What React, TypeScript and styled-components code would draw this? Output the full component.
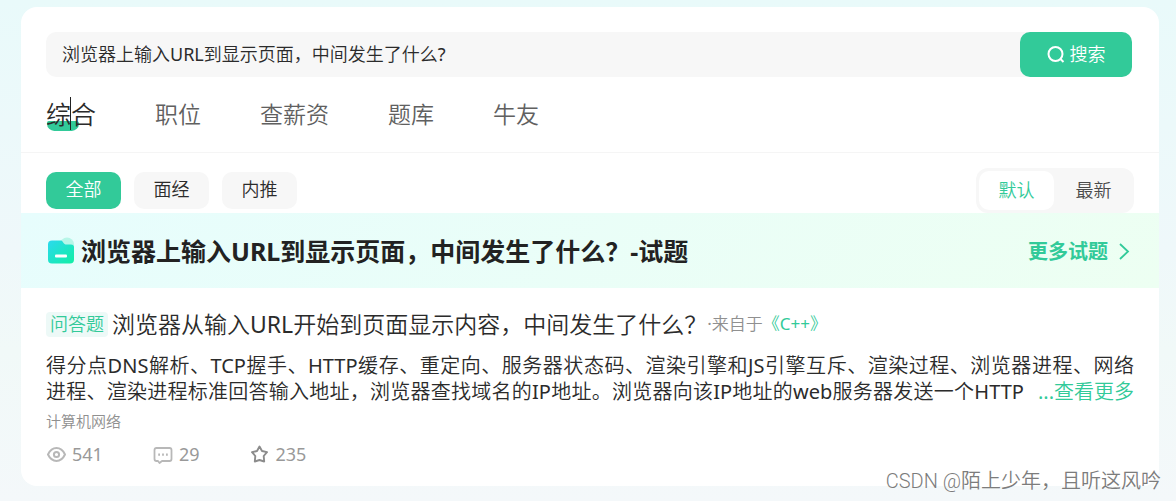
import React from "react";
import styled, { createGlobalStyle } from "styled-components";

const green = "#32ca99";
const sans = `"Noto Sans", "Noto Sans CJK SC DemiLight", "Noto Sans CJK SC", sans-serif`;
const boldSans = `"Noto Sans", "Noto Sans CJK SC", sans-serif`;

const GlobalStyle = createGlobalStyle`
  * { box-sizing: border-box; }
  body {
    margin: 0;
    min-height: 100vh;
    font-family: ${sans};
    font-weight: 400;
    color: #2b2b2b;
    background: linear-gradient(180deg, #e9fafa 0%, #eff8fa 50%, #f1f9f8 70%, #f4f8fa 100%);
  }
  button, input { font: inherit; color: inherit; border: 0; padding: 0; margin: 0; }
  button { cursor: pointer; }
  a { color: ${green}; text-decoration: none; }
  h1, h2, p { margin: 0; }
`;

const Page = styled.div`
  position: relative;
  min-height: 100vh;
  padding: 7px 17px 15px 21px;
`;

const Card = styled.main`
  background: #fff;
  border-radius: 16px;
  overflow: hidden;
`;

const SearchForm = styled.form`
  display: flex;
  height: 45px;
  margin: 25px 27px 0 25px;
  border-radius: 10px;
  background: #f7f7f7;
`;

const SearchInput = styled.input`
  flex: 1;
  min-width: 0;
  padding: 0 16px 4px;
  font-size: 18px;
  background: transparent;
  outline: none;
`;

const SearchButton = styled.button`
  display: flex;
  align-items: center;
  justify-content: center;
  gap: 5px;
  width: 112px;
  border-radius: 10px;
  font-size: 18px;
  color: #fff;
  background: ${green};
`;

const ButtonLabel = styled.span`
  padding-bottom: 4px;
`;

const Tabs = styled.nav`
  display: flex;
  align-items: center;
  gap: 59px;
  height: 76px;
  padding: 0 25px 1px;
  border-bottom: 1px solid #f5f5f5;
`;

const Tab = styled.a<{ $active?: boolean }>`
  position: relative;
  z-index: 0;
  font-size: ${(p) => (p.$active ? 25 : 23)}px;
  line-height: 34px;
  color: ${(p) => (p.$active ? "#2b2b2b" : "#606060")};
`;

const TabMark = styled.span`
  position: absolute;
  z-index: -1;
  left: 1px;
  bottom: 0;
  width: 32px;
  height: 10px;
  border-radius: 2px 3px 8px 8px;
  background: ${green};
`;

const TextCursor = styled.span`
  position: absolute;
  left: 24px;
  top: 0;
  width: 1px;
  height: 33px;
  background: #222;
`;

const FilterBar = styled.div`
  display: flex;
  align-items: center;
  justify-content: space-between;
  padding: 15px 25px 0;
`;

const Filters = styled.div`
  display: flex;
  gap: 13px;
`;

const Filter = styled.button<{ $active?: boolean }>`
  width: 75px;
  height: 37px;
  padding-bottom: 3px;
  border-radius: 10px;
  font-size: 18px;
  line-height: 34px;
  color: ${(p) => (p.$active ? "#fff" : "#2b2b2b")};
  background: ${(p) => (p.$active ? green : "#f7f7f7")};
`;

const SortGroup = styled.div`
  display: flex;
  gap: 2px;
  padding: 3px;
  border-radius: 12px;
  background: #f7f7f7;
`;

const SortButton = styled.button<{ $active?: boolean }>`
  width: 75px;
  height: 39px;
  padding-bottom: 3px;
  border-radius: 10px;
  font-size: 18px;
  color: ${(p) => (p.$active ? green : "#4a4a4a")};
  background: ${(p) => (p.$active ? "#fff" : "transparent")};
`;

const Banner = styled.header`
  display: flex;
  align-items: center;
  height: 75px;
  padding: 0 27px 0 25px;
  font-family: ${boldSans};
  background: linear-gradient(135deg, #e7fdfd 0%, #edfff2 100%);
`;

const BannerTitle = styled.h1`
  flex: 1;
  margin-left: 5px;
  padding-bottom: 2px;
  font-size: 25px;
  font-weight: 700;
  color: #222;
`;

const MoreLink = styled.a`
  display: flex;
  align-items: center;
  gap: 8px;
  font-size: 20px;
  font-weight: 700;
`;

const Question = styled.article`
  padding: 19px 25px 19px;
`;

const QuestionHead = styled.div`
  display: flex;
  align-items: center;
  height: 34px;
`;

const Tag = styled.span`
  margin-right: 4px;
  padding: 0 4px;
  border-radius: 4px;
  font-size: 18px;
  line-height: 25px;
  color: ${green};
  background: #edf9f7;
`;

const QuestionTitle = styled.h2`
  font-size: 23px;
  font-weight: 400;
  line-height: 34px;
`;

const Source = styled.span`
  font-size: 17px;
  line-height: 26px;
  color: #909090;
`;

const Summary = styled.div`
  margin-top: 12px;
  font-size: 20px;
  line-height: 26px;
`;

const SummaryLine = styled.div`
  display: flex;
  gap: 14px;
`;

const SummaryText = styled.p`
  flex: 1;
  text-align: justify;
  text-align-last: justify;
`;

const Topic = styled.p`
  margin-top: 5px;
  font-size: 15px;
  line-height: 22px;
  color: #909090;
`;

const Stats = styled.div`
  display: flex;
  gap: 50px;
  margin-top: 9px;
`;

const Stat = styled.span`
  display: flex;
  align-items: center;
  gap: 6px;
  font-size: 18px;
  line-height: 26px;
  color: #999;
`;

const Watermark = styled.div`
  position: absolute;
  right: 15px;
  bottom: 5px;
  font-family: Roboto, "Noto Sans CJK SC DemiLight", "Noto Sans CJK SC", sans-serif;
  font-size: 20px;
  font-weight: 300;
  line-height: 30px;
  color: #7c7c7c;
  text-shadow: -1px -1px 0 #fff;
`;

const SearchIcon = () => (
  <svg width="18" height="18" viewBox="0 0 18 18" fill="none" stroke="#fff" strokeWidth="2" aria-hidden="true">
    <circle cx="8.5" cy="8" r="7" />
    <path d="M13 12.500 16.500 16" />
  </svg>
);

const FolderIcon = () => (
  <svg width="30" height="30" viewBox="0 0 30 30" aria-hidden="true">
    <defs>
      <linearGradient id="folder" x1="0" y1="0" x2="1" y2="1">
        <stop offset="0" stopColor="#2bd9ee" />
        <stop offset="1" stopColor="#12efa4" />
      </linearGradient>
    </defs>
    <circle cx="21" cy="8.500" r="7" fill="#b7f6e8" />
    <path
      d="M6 4.500H14.500C16 4.500 16.300 5.200 17 6.200C18 7.800 19 8.500 20.500 8.500H25C27 8.500 28 9.500 28 11V23.500C28 26 26.800 27.500 24 27.500H6C3.200 27.500 2 26 2 23.500V8.500C2 6 3.400 4.500 6 4.500Z"
      fill="url(#folder)"
    />
    <rect x="9" y="18.500" width="12" height="3" rx="1" fill="#fff" />
  </svg>
);

const ChevronIcon = () => (
  <svg width="16" height="18" viewBox="0 0 16 18" fill="none" stroke={green} strokeWidth="1.8" aria-hidden="true">
    <path d="M4 2 12 9.500 4 17" />
  </svg>
);

const EyeIcon = () => (
  <svg width="20" height="20" viewBox="0 0 20 20" fill="none" stroke="#b8b8b8" strokeWidth="2" aria-hidden="true">
    <path d="M2 10.500C4 6.300 6.600 4.100 10.500 4.100S17 6.300 19 10.500C17 14.700 14.400 16.900 10.500 16.900S4 14.700 2 10.500Z" strokeLinejoin="round" />
    <circle cx="10.500" cy="10.500" r="2.600" />
  </svg>
);

const CommentIcon = () => (
  <svg width="20" height="20" viewBox="0 0 20 20" fill="none" stroke="#b8b8b8" strokeWidth="1.8" aria-hidden="true">
    <path d="M3.500 4H16.500Q18.500 4 18.500 6V15Q18.500 17 16.500 17H9L6.500 19L5 17H3.500Q1.500 17 1.500 15V6Q1.500 4 3.500 4Z" strokeLinejoin="round" />
    <path d="M5.200 10.700H7M9.100 10.700H10.900M13 10.700H14.800" strokeWidth="2.2" />
  </svg>
);

const StarIcon = () => (
  <svg width="20" height="20" viewBox="0 0 20 20" fill="none" stroke="#8c8c8c" strokeWidth="1.9" strokeLinejoin="round" aria-hidden="true">
    <path d="M10.500 2.500 13 7 18 8.200 14.700 12 15.200 17.500 10.500 16 5.800 17.500 6.300 12 3 8.200 8 7Z" />
  </svg>
);

const stats = [
  { icon: <EyeIcon />, value: 541 },
  { icon: <CommentIcon />, value: 29 },
  { icon: <StarIcon />, value: 235 },
];

export default function App() {
  return (
    <>
      <GlobalStyle />
      <Page>
        <Card>
          <SearchForm onSubmit={(e) => e.preventDefault()}>
            <SearchInput aria-label="搜索" defaultValue="浏览器上输入URL到显示页面，中间发生了什么?" />
            <SearchButton type="submit">
              <SearchIcon />
              <ButtonLabel>搜索</ButtonLabel>
            </SearchButton>
          </SearchForm>
          <Tabs>
            <Tab href="#all" $active>
              <TabMark />
              综合
              <TextCursor />
            </Tab>
            {["职位", "查薪资", "题库", "牛友"].map((name) => (
              <Tab key={name} href={`#${name}`}>{name}</Tab>
            ))}
          </Tabs>
          <FilterBar>
            <Filters>
              <Filter type="button" $active>全部</Filter>
              <Filter type="button">面经</Filter>
              <Filter type="button">内推</Filter>
            </Filters>
            <SortGroup>
              <SortButton type="button" $active>默认</SortButton>
              <SortButton type="button">最新</SortButton>
            </SortGroup>
          </FilterBar>
          <Banner>
            <FolderIcon />
            <BannerTitle>浏览器上输入URL到显示页面，中间发生了什么？-试题</BannerTitle>
            <MoreLink href="#more">
              更多试题
              <ChevronIcon />
            </MoreLink>
          </Banner>
          <Question>
            <QuestionHead>
              <Tag>问答题</Tag>
              <QuestionTitle>浏览器从输入URL开始到页面显示内容，中间发生了什么？</QuestionTitle>
              <Source>
                ·来自于<a href="#cpp">《C++》</a>
              </Source>
            </QuestionHead>
            <Summary>
              <SummaryLine>
                <SummaryText>
                  得分点DNS解析、TCP握手、HTTP缓存、重定向、服务器状态码、渲染引擎和JS引擎互斥、渲染过程、浏览器进程、网络
                </SummaryText>
              </SummaryLine>
              <SummaryLine>
                <SummaryText>
                  进程、渲染进程标准回答输入地址，浏览器查找域名的IP地址。浏览器向该IP地址的web服务器发送一个HTTP
                </SummaryText>
                <a href="#detail">...查看更多</a>
              </SummaryLine>
            </Summary>
            <Topic>计算机网络</Topic>
            <Stats>
              {stats.map((s) => (
                <Stat key={s.value}>
                  {s.icon}
                  {s.value}
                </Stat>
              ))}
            </Stats>
          </Question>
        </Card>
        <Watermark>CSDN @陌上少年，且听这风吟</Watermark>
      </Page>
    </>
  );
}
